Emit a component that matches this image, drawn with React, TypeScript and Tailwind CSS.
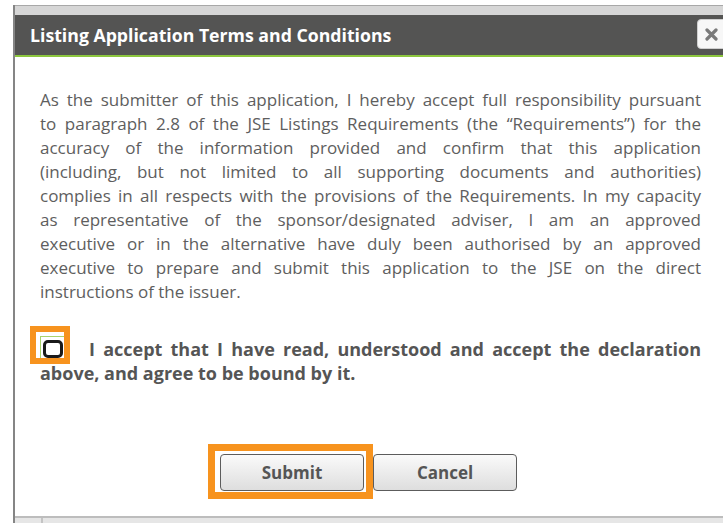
import { useState } from 'react'

const TERMS = [
  'As the submitter of this application, I hereby accept full responsibility pursuant',
  'to paragraph 2.8 of the JSE Listings Requirements (the “Requirements”) for the',
  'accuracy of the information provided and confirm that this application',
  '(including, but not limited to all supporting documents and authorities)',
  'complies in all respects with the provisions of the Requirements. In my capacity',
  'as representative of the sponsor/designated adviser, I am an approved',
  'executive or in the alternative have duly been authorised by an approved',
  'executive to prepare and submit this application to the JSE on the direct',
  'instructions of the issuer.',
]

const heading = "font-['Open_Sans',sans-serif] font-bold"

function Button({ label, highlight }: { label: string; highlight?: boolean }) {
  return (
    <div className="relative">
      <button
        className={`h-[37px] w-[144px] rounded-[4px] border border-[#5c5c5c] bg-gradient-to-b from-[#fafafa] to-[#dedede] text-[17px] text-[#555] ${heading}`}
      >
        {label}
      </button>
      {highlight && (
        <div className="pointer-events-none absolute left-[-12px] right-[-9px] top-[-10px] bottom-[-8px] border-[7px] border-[#f7931e]" />
      )}
    </div>
  )
}

export default function App() {
  const [accepted, setAccepted] = useState(false)

  return (
    <div className="h-[523px] w-[723px] overflow-hidden bg-white">
      <div className="ml-[13px] mt-[5px] flex h-[518px] w-[714px] flex-col border-l-2 border-[#858585]">
        {/* title bar */}
        <div className="h-[10px] border-t border-[#a8a8a8] bg-[#d6d6d6]" />
        <div className="relative flex h-[42px] items-center border-b-2 border-[#8cc63e] bg-[#545453] pl-[15px]">
          <h2 className={`text-[17.7px] text-white ${heading}`}>Listing Application Terms and Conditions</h2>
          <button
            aria-label="Close"
            className="absolute right-0 top-[4px] flex h-[30px] w-[30px] items-center justify-center rounded-[4px] border border-[#cfcfcf] bg-[#f7f7f7]"
          >
            <svg width="13" height="13" viewBox="0 0 13 13" className="mr-[2px]">
              <path d="M2 2L11 11M11 2L2 11" stroke="#7a7a7a" strokeWidth="3.2" strokeLinecap="round" />
            </svg>
          </button>
        </div>

        {/* terms */}
        <div className="pl-[25px] pr-[26px] pt-[31px] font-['Open_Sans',sans-serif] text-[17px] leading-[24px] text-[#5e5e5e]">
          {TERMS.map((line, i) => (
            <div
              key={i}
              className={i < TERMS.length - 1 ? 'whitespace-nowrap text-justify [text-align-last:justify]' : ''}
            >
              {line}
            </div>
          ))}
        </div>

        {/* declaration */}
        <div className={`mt-[32px] pl-[25px] pr-[26px] text-[18px] leading-[24px] text-[#555] ${heading}`}>
          <div className="flex items-center">
            <div className="relative">
              <button
                onClick={() => setAccepted(!accepted)}
                className="flex h-[25px] w-[25px] items-center justify-center border border-[#a9d46c] bg-white"
              >
                <span className="flex h-[18px] w-[20px] items-center justify-center rounded-[5px] border-[3px] border-[#1a1a1a]">
                  {accepted && <span className="h-[6px] w-[8px] rounded-[1px] bg-[#1a1a1a]" />}
                </span>
              </button>
              <div className="pointer-events-none absolute left-[-10px] right-[-5px] top-[-10px] bottom-[-3px] border-[6px] border-[#f7931e]" />
            </div>
            <div className="ml-[24px] flex-1 text-justify [text-align-last:justify]">
              I accept that I have read, understood and accept the declaration
            </div>
          </div>
          <div>above, and agree to be bound by it.</div>
        </div>

        {/* actions */}
        <div className="mt-[69px] flex gap-[9px] pl-[205px]">
          <Button label="Submit" highlight />
          <Button label="Cancel" />
        </div>

        <div className="mt-[25px] flex flex-1 border-t-2 border-[#bdbdbd] bg-[#e6e6e6]">
          <div className="w-[28px] border-r-2 border-[#c4c4c4]" />
        </div>
      </div>
    </div>
  )
}
